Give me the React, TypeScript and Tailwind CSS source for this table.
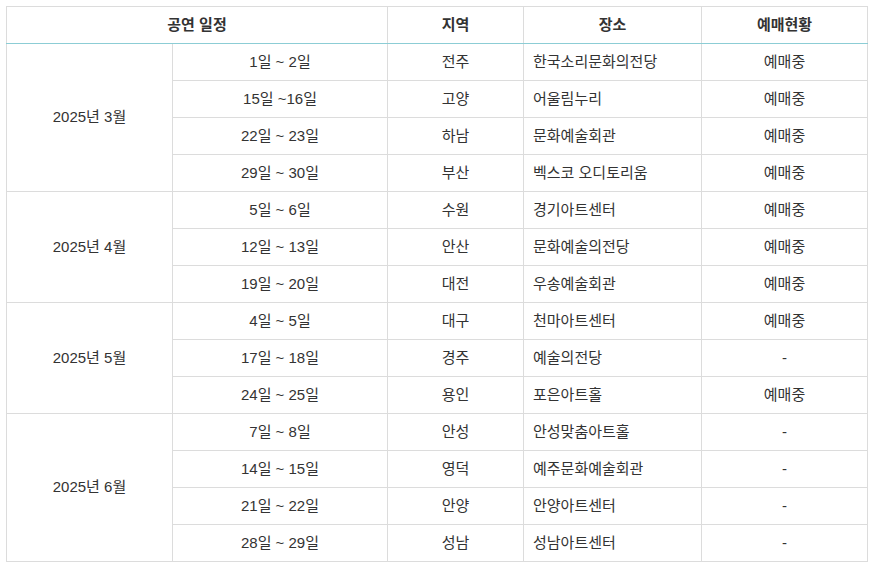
const schedule = [
  {
    month: "2025년 3월",
    rows: [
      ["1일 ~ 2일", "전주", "한국소리문화의전당", "예매중"],
      ["15일 ~16일", "고양", "어울림누리", "예매중"],
      ["22일 ~ 23일", "하남", "문화예술회관", "예매중"],
      ["29일 ~ 30일", "부산", "벡스코 오디토리움", "예매중"],
    ],
  },
  {
    month: "2025년 4월",
    rows: [
      ["5일 ~ 6일", "수원", "경기아트센터", "예매중"],
      ["12일 ~ 13일", "안산", "문화예술의전당", "예매중"],
      ["19일 ~ 20일", "대전", "우송예술회관", "예매중"],
    ],
  },
  {
    month: "2025년 5월",
    rows: [
      ["4일 ~ 5일", "대구", "천마아트센터", "예매중"],
      ["17일 ~ 18일", "경주", "예술의전당", "-"],
      ["24일 ~ 25일", "용인", "포은아트홀", "예매중"],
    ],
  },
  {
    month: "2025년 6월",
    rows: [
      ["7일 ~ 8일", "안성", "안성맞춤아트홀", "-"],
      ["14일 ~ 15일", "영덕", "예주문화예술회관", "-"],
      ["21일 ~ 22일", "안양", "안양아트센터", "-"],
      ["28일 ~ 29일", "성남", "성남아트센터", "-"],
    ],
  },
];

const cell = "border border-[#dcdcdc] h-[37px] p-0 align-middle";

export default function App() {
  return (
    <div className="bg-white min-h-screen pt-[6px] pl-[6px] font-['Liberation_Sans','Noto_Sans_CJK_KR',sans-serif] text-[15px] text-[#333]">
      <table className="border-collapse table-fixed w-[861px]">
        <colgroup>
          <col className="w-[166px]" />
          <col className="w-[215px]" />
          <col className="w-[136px]" />
          <col className="w-[178px]" />
          <col className="w-[166px]" />
        </colgroup>
        <thead>
          <tr>
            <th colSpan={2} className={`${cell} border-b-[#8ccdd5] font-bold text-center`}>
              공연 일정
            </th>
            <th className={`${cell} border-b-[#8ccdd5] font-bold text-center`}>지역</th>
            <th className={`${cell} border-b-[#8ccdd5] font-bold text-center`}>장소</th>
            <th className={`${cell} border-b-[#8ccdd5] font-bold text-center`}>예매현황</th>
          </tr>
        </thead>
        <tbody>
          {schedule.map((group) =>
            group.rows.map((r, i) => (
              <tr key={group.month + i}>
                {i === 0 && (
                  <td rowSpan={group.rows.length} className={`${cell} text-center`}>
                    {group.month}
                  </td>
                )}
                <td className={`${cell} text-center`}>{r[0]}</td>
                <td className={`${cell} text-center`}>{r[1]}</td>
                <td className={`${cell} text-left pl-[9px]`}>{r[2]}</td>
                <td className={`${cell} text-center`}>{r[3]}</td>
              </tr>
            ))
          )}
        </tbody>
      </table>
    </div>
  );
}
